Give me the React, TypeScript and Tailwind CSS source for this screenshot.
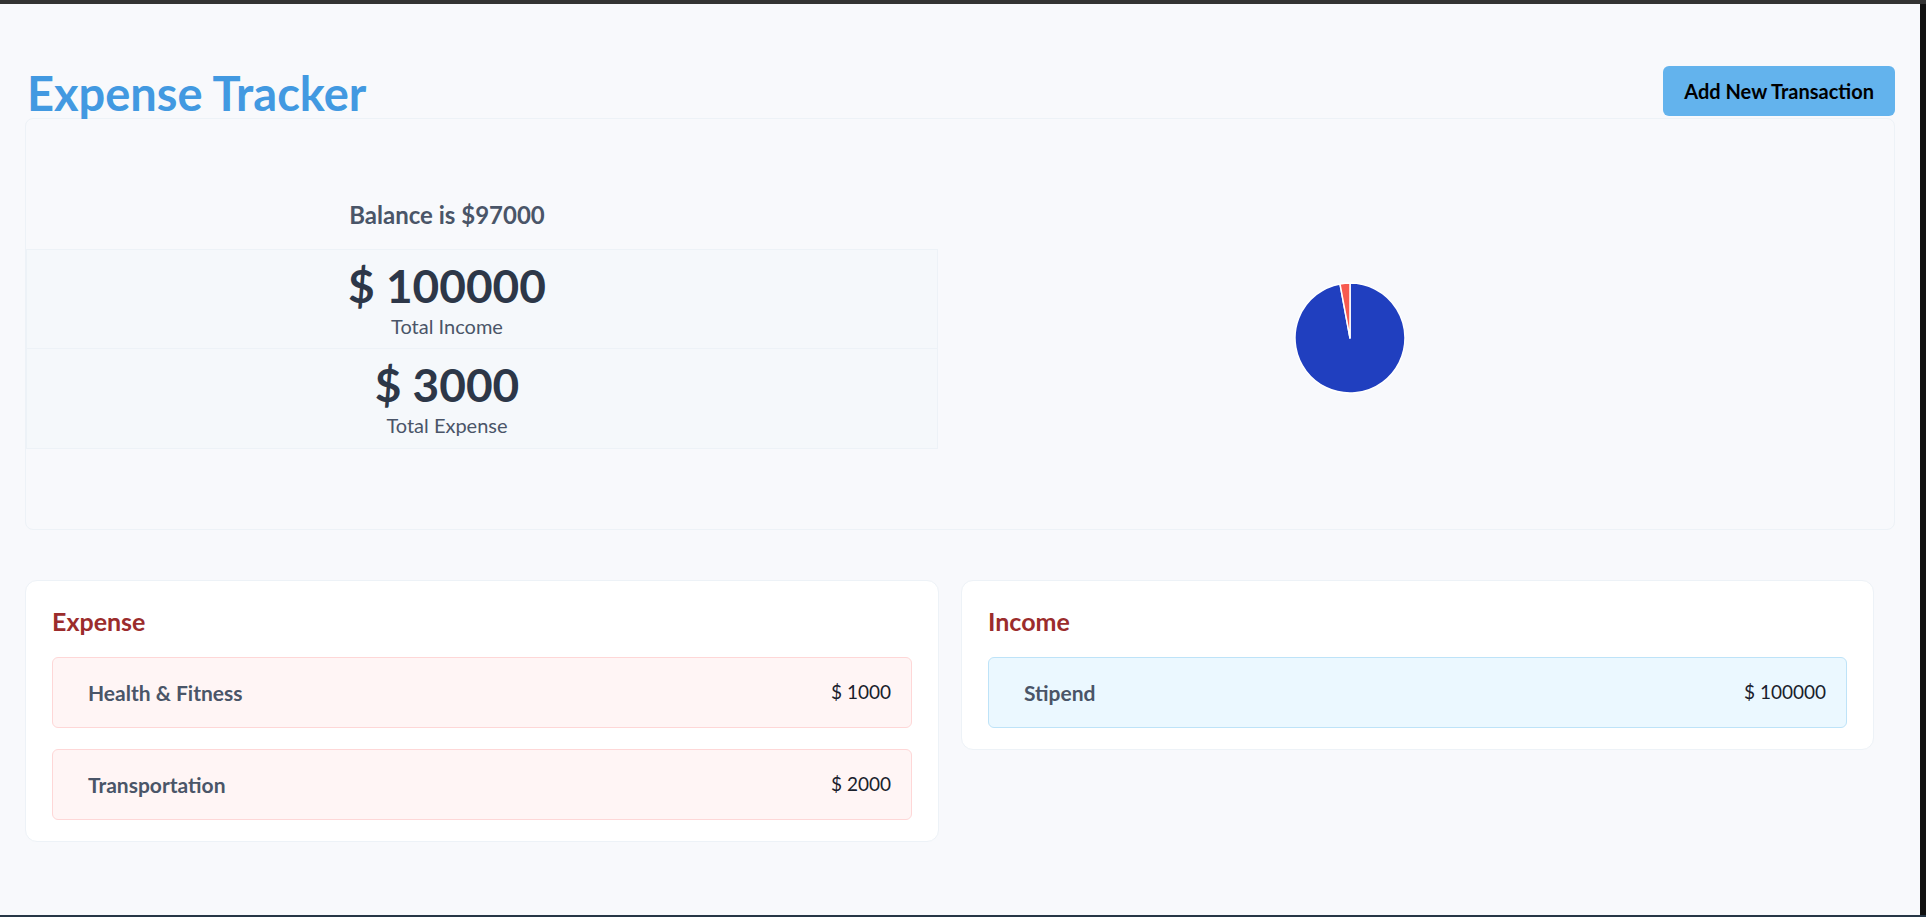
import React from 'react';

// --- Types ---
interface Transaction {
  id: number;
  label: string;
  amount: number;
  type: 'expense' | 'income';
}

const transactions: Transaction[] = [
  { id: 1, label: 'Health & Fitness', amount: 1000, type: 'expense' },
  { id: 2, label: 'Transportation', amount: 2000, type: 'expense' },
  { id: 3, label: 'Stipend', amount: 100000, type: 'income' },
];

const FONT = { fontFamily: 'Lato, "Open Sans", sans-serif' };

// --- Pie chart (income vs expense) ---
const PieChart: React.FC<{ income: number; expense: number }> = ({ income, expense }) => {
  const r = 55;
  const c = 56;
  const angle = (expense / (income + expense)) * 2 * Math.PI;
  const ex = c - r * Math.sin(angle);
  const ey = c - r * Math.cos(angle);
  return (
    <svg width="112" height="112" viewBox="0 0 112 112">
      <path
        d={`M${c},${c} L${c},${c - r} A${r},${r} 0 1 1 ${ex},${ey} Z`}
        fill="#203fbf"
        stroke="#ffffff"
        strokeWidth="1.5"
        strokeLinejoin="round"
      />
      <path
        d={`M${c},${c} L${ex},${ey} A${r},${r} 0 0 1 ${c},${c - r} Z`}
        fill="#f75a4f"
        stroke="#ffffff"
        strokeWidth="1.5"
        strokeLinejoin="round"
      />
    </svg>
  );
};

const StatBox: React.FC<{ value: number; label: string; first?: boolean }> = ({ value, label, first }) => (
  <div
    className={`h-[100px] bg-[#f5f8fb] border-[#edf2f7] flex flex-col items-center pt-[13px] pr-[70px] ${
      first ? 'border' : 'border-x border-b'
    }`}
  >
    <p className="text-[46px] leading-none font-bold text-[#2d3748]">$ {value}</p>
    <p className="text-[20px] leading-[27px] mt-[4px] text-[#4a5568]">{label}</p>
  </div>
);

const TransactionList: React.FC<{ title: string; items: Transaction[]; width: string }> = ({ title, items, width }) => (
  <div className={`${width} bg-white border border-[#edf2f7] rounded-xl pt-[25px] pb-[21px] px-[26px]`}>
    <h2 className="text-[25px] leading-[30px] font-bold text-[#9b2c2c] mb-[21px]">{title}</h2>
    <div className="flex flex-col gap-[21px]">
      {items.map((t) => (
        <div
          key={t.id}
          className={`h-[71px] rounded-md border flex items-center justify-between pl-[35px] pr-[20px] ${
            t.type === 'expense' ? 'bg-[#fff5f5] border-[#fed7d7]' : 'bg-[#ebf8ff] border-[#bee3f8]'
          }`}
        >
          <span className="text-[21px] font-bold text-[#4a5568]">{t.label}</span>
          <span className="text-[19px] text-[#1a202c]">$ {t.amount}</span>
        </div>
      ))}
    </div>
  </div>
);

export default function App() {
  const income = transactions.filter((t) => t.type === 'income').reduce((s, t) => s + t.amount, 0);
  const expense = transactions.filter((t) => t.type === 'expense').reduce((s, t) => s + t.amount, 0);

  return (
    <div className="h-[917px] w-full flex flex-col overflow-hidden bg-[#111]" style={FONT}>
      <div className="h-[4px] bg-[#333333]" />
      <div className="flex-1 flex">
        <main className="w-[1920px] bg-[#f8f9fc] pl-[25px] pr-[25px] pt-[62px]">
          {/* header */}
          <header className="h-[50px] flex items-center justify-between">
            <h1 className="text-[47px] leading-none font-bold text-[#4299e1] pl-[2px] mt-[5px]">Expense Tracker</h1>
            <button className="h-[50px] px-[21px] rounded-md bg-[#63b3ed] text-black text-[20px] font-bold">
              Add New Transaction
            </button>
          </header>

          {/* summary card */}
          <section className="mt-[2px] h-[412px] border border-[#edf2f7] rounded-lg flex">
            <div className="w-[912px] flex flex-col pt-[84px]">
              <h3 className="text-[24px] leading-none font-bold text-[#4a5568] text-center pr-[70px] mb-[22px]">
                Balance is ${income - expense}
              </h3>
              <StatBox value={income} label="Total Income" first />
              <StatBox value={expense} label="Total Expense" />
            </div>
            <div className="flex-1 flex items-center justify-center pr-[133px] pt-[27px]">
              <PieChart income={income} expense={expense} />
            </div>
          </section>

          {/* lists */}
          <section className="mt-[50px] flex items-start gap-[22px]">
            <TransactionList title="Expense" items={transactions.filter((t) => t.type === 'expense')} width="w-[914px]" />
            <TransactionList title="Income" items={transactions.filter((t) => t.type === 'income')} width="w-[913px]" />
          </section>
        </main>
        <div className="flex-1 bg-[#111111]" />
      </div>
      <div className="h-[2px] bg-[#263646]" />
    </div>
  );
}
